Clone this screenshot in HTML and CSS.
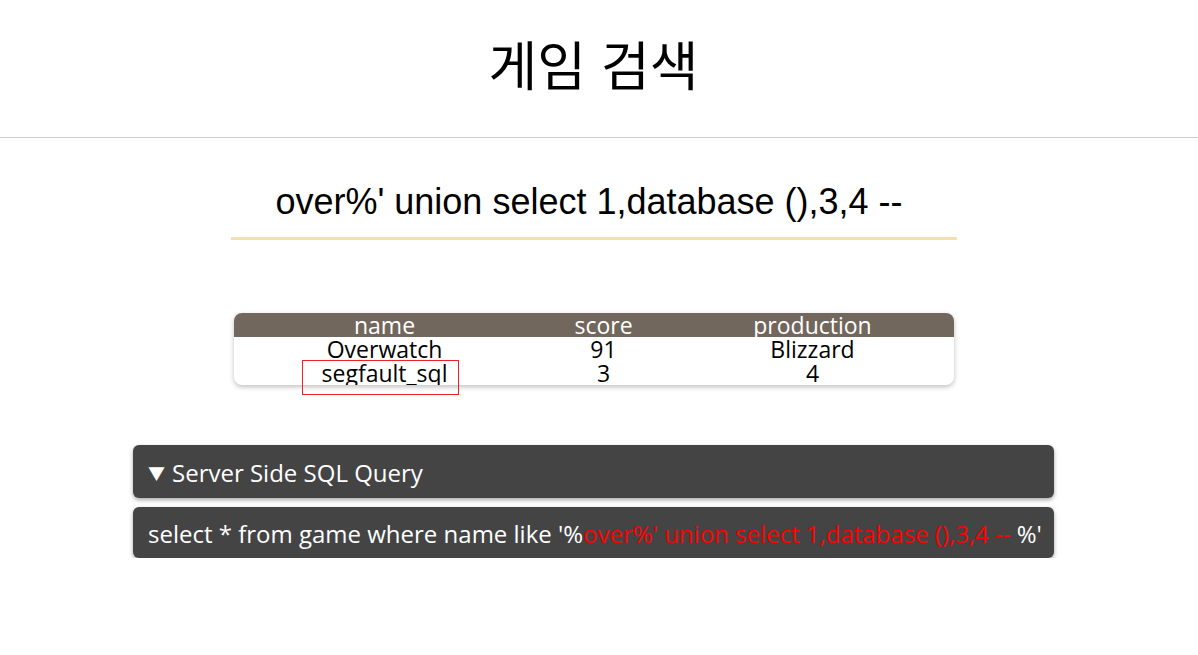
FILE: index.html
```html
<!DOCTYPE html>
<html lang="ko">
<head>
<meta charset="utf-8">
<title>게임 검색</title>
<link rel="stylesheet" href="styles.css">
</head>
<body>
<header class="header">
  <h1 class="title">게임 검색</h1>
</header>
<main class="page">
  <form class="search">
    <input class="search-input" type="text" value="over%' union select 1,database (),3,4 --">
  </form>
  <div class="table-wrap">
    <table class="games">
      <thead>
        <tr><th class="c-name">name</th><th class="c-score">score</th><th class="c-prod">production</th></tr>
      </thead>
      <tbody>
        <tr><td>Overwatch</td><td>91</td><td>Blizzard</td></tr>
        <tr><td>segfault_sql</td><td>3</td><td>4</td></tr>
      </tbody>
    </table>
    <div class="highlight"></div>
  </div>
  <details class="query" open>
    <summary class="query-summary"><span class="tri">▼</span>Server Side SQL Query</summary>
    <div class="query-body">select * from game where name like '%<span class="inj">over%' union select 1,database (),3,4 -- </span>%'</div>
  </details>
</main>
</body>
</html>
```
FILE: styles.css
```css
html, body {
  margin: 0;
  padding: 0;
  background: #fff;
}
body {
  font-family: "Open Sans", "Noto Sans CJK KR", sans-serif;
  color: #000;
}
.header {
  height: 137px;
  border-bottom: 1px solid #cccccc;
  display: flex;
  align-items: center;
  justify-content: center;
  padding-right: 11px;
}
.title {
  margin: 0;
  font-family: "Noto Sans CJK KR", sans-serif;
  font-weight: 400;
  font-size: 53px;
  line-height: 1;
  padding-bottom: 10px;
}
.page {
  padding-right: 11px;
  display: flex;
  flex-direction: column;
  align-items: center;
}
.search {
  margin-top: 37px;
  width: 726px;
}
.search-input {
  display: block;
  box-sizing: border-box;
  width: 726px;
  height: 65px;
  border: none;
  border-bottom: 3px solid #f5deb3;
  outline: none;
  background: transparent;
  font-family: "Liberation Sans", Arial, sans-serif;
  font-size: 36px;
  text-align: center;
  color: #000;
  padding: 0 9px 8px 0;
}
.table-wrap {
  position: relative;
  margin-top: 73px;
}
.games {
  width: 720px;
  border-collapse: collapse;
  border-radius: 8px;
  overflow: hidden;
  box-shadow: 0 2px 5px rgba(0,0,0,0.25);
  font-size: 23px;
  table-layout: fixed;
}
.games th, .games td {
  padding: 0;
  height: 24px;
  line-height: 24px;
  text-align: center;
  font-weight: 400;
}
.games thead tr {
  background: #72675d;
  color: #fff;
}
.c-name { width: 302px; }
.c-score { width: 136px; }
.c-prod { width: 282px; }
.highlight {
  position: absolute;
  left: 68px;
  top: 47px;
  width: 157px;
  height: 35px;
  box-sizing: border-box;
  border: 1px solid #ee2222;
}
.query {
  margin-top: 60px;
  width: 921px;
  color: #fff;
  font-size: 24px;
}
.query-summary {
  list-style: none;
  background: #444444;
  border-radius: 6px;
  height: 53px;
  line-height: 55px;
  padding-left: 15px;
  box-shadow: 0 2px 4px rgba(0,0,0,0.35);
  cursor: pointer;
}
.query-summary::-webkit-details-marker { display: none; }
.tri {
  font-size: 17px;
  margin-right: 7px;
  vertical-align: 2px;
}
.query-body {
  margin-top: 9px;
  background: #444444;
  border-radius: 6px;
  height: 51px;
  line-height: 53px;
  padding-left: 15px;
  box-shadow: 0 2px 4px rgba(0,0,0,0.35);
  white-space: nowrap;
}
.inj { color: #ff0000; }
```
